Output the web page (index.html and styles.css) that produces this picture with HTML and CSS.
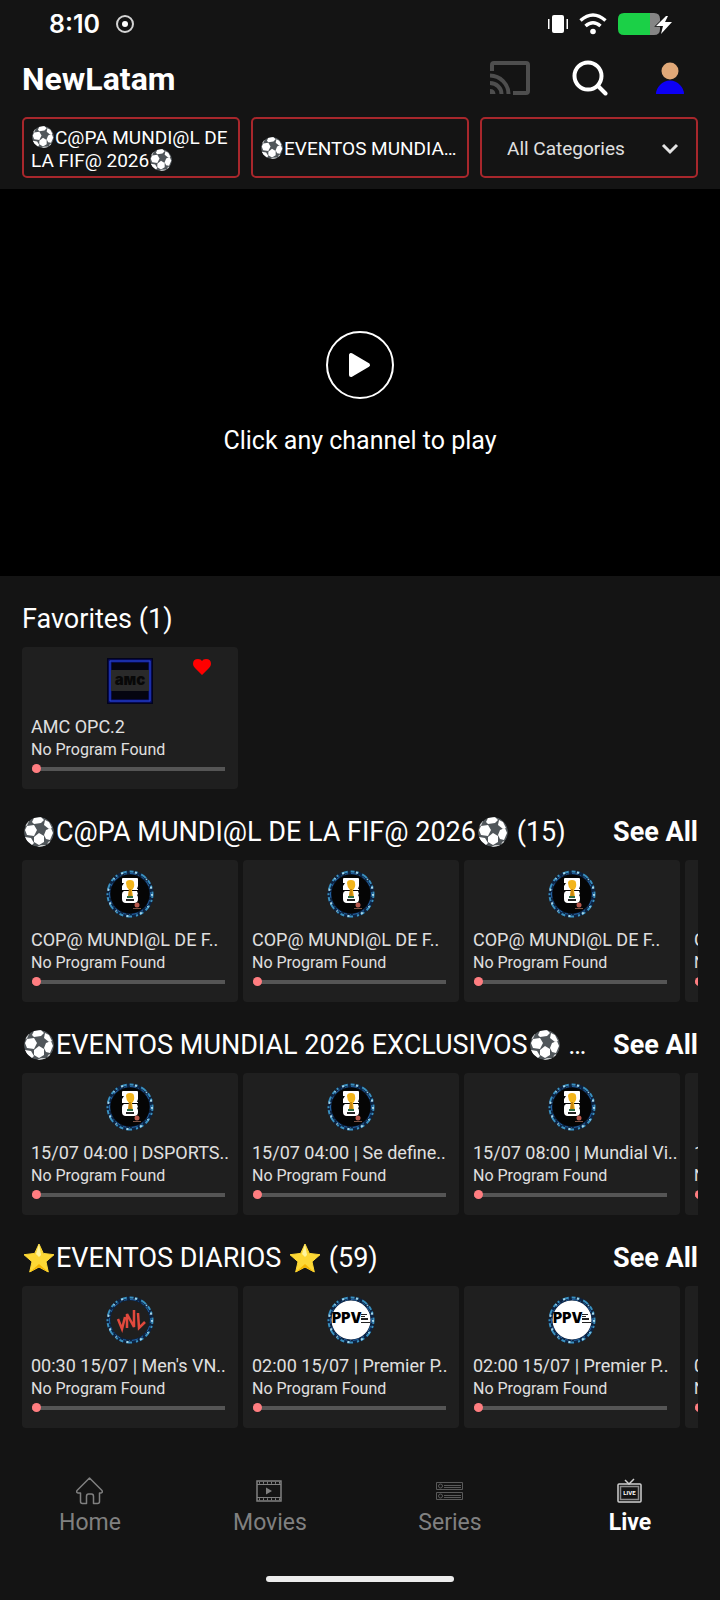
FILE: index.html
```html
<!DOCTYPE html>
<html lang="es">
  <head>
    <meta charset="UTF-8" />
    <meta name="viewport" content="width=device-width, initial-scale=1.0" />
    <title>NewLatam - Live</title>
    <link rel="stylesheet" href="styles.css">
  </head>
  <body>
    <!-- Shared drawings -->
    <svg class="symbols" aria-hidden="true">
      <symbol id="ball" viewBox="0 0 30 30">
        <clipPath id="ball-clip"><circle cx="15" cy="15" r="15" /></clipPath>
        <g clip-path="url(#ball-clip)">
          <circle cx="15" cy="15" r="15" fill="#50565a" />
          <g fill="#fff">
            <path d="M10 1l7-1 3 3-3 3-7 1-2-2z" />
            <path d="M21 3l4 2 3 6-3 1-5-4z" />
            <path d="M3 9l7-1 3 5-3 6-7-1-2-5z" />
            <path d="M10 20l5-4 5 3v6l-5 3-5-3z" />
            <path d="M22 13l5-2 2 5-3 7-4-1-2-4z" />
            <path d="M1 20l6 1 3 5-2 2-5-4z" />
          </g>
          <g fill="#c9cccd">
            <path d="M0 8l3-5 2 1-2 5zM13 30l4-2 6 0-2 3zM24 25l2-1 1 2-4 3z" />
          </g>
        </g>
      </symbol>
      <symbol id="star" viewBox="0 0 30 30">
        <path d="M15 1l4.300 9.400 10.700 1.300-8 7 2.300 10.300-9.300-5-9.300 5L8 18.700 0 11.700l10.700-1.300z" fill="#fdd835" stroke="#fdd835" stroke-linejoin="round" />
        <path d="M15 1l2 11-2 2-3-3z" fill="#fff59d" />
        <path d="M24 29l-9-5-9 5 9-8z" fill="#f4b400" />
      </symbol>
      <symbol id="ring" viewBox="0 0 48 48">
        <g fill="none">
          <circle cx="24" cy="24" r="21.500" stroke="#0c2342" stroke-width="4" />
          <circle cx="24" cy="24" r="22.500" stroke="#3a8fbd" stroke-width="2" stroke-dasharray="4 2 2 4 6 3" />
          <circle cx="24" cy="24" r="20.500" stroke="#2463a4" stroke-width="1" stroke-dasharray="3 3 6 2 1 3" />
          <circle cx="24" cy="24" r="22" stroke="#a5d6ea" stroke-width="2" stroke-dasharray="2 11 1 8 2 12" />
        </g>
      </symbol>
      <symbol id="logo-26" viewBox="0 0 48 48">
        <circle cx="24" cy="24" r="20" fill="#050505" />
        <use href="#ring" />
        <g fill="#fff">
          <path d="M17 8h14q1 0 1 1v7l-1 3h1v1H16v-4l2-3h-2V9q0-1 1-1z" />
          <path d="M18 21h13l1 3-1 1q1 1 1 3v1q0 4-4 4h-8q-4 0-4-4v-5q0-2 2-3z" />
        </g>
        <path d="M20 13q0-3 4-3t4 3q1 4-2 7l1 7h-5l1-7q-3-3-3-7z" fill="#f3b51b" />
        <path d="M23 19h2l1 8h-4z" fill="#c9870f" />
        <path d="M21 26h6v2h-6z" fill="#2c6b45" />
        <path d="M20 29h8v2h-8z" fill="#222" />
        <circle cx="31" cy="35" r="2.500" fill="#b95a4e" />
        <path d="M27 38h8v1h-8z" fill="#7b5346" />
      </symbol>
      <symbol id="logo-vnl" viewBox="0 0 48 48">
        <use href="#ring" />
        <path d="M12 23l4 10 3-12M21 32V18l7 13V14M32 17l1 15 6-6" fill="none" stroke="#e2493d" stroke-width="2.500" />
      </symbol>
      <symbol id="logo-ppv" viewBox="0 0 48 48">
        <circle cx="24" cy="24" r="20" fill="#fff" />
        <use href="#ring" />
        <path d="M34 18h6v1h-6zM34 20h4v1h-4zM34 22h7v2h-7zM34 26h9v1h-9z" fill="#222" />
      </symbol>
      <symbol id="logo-amc" viewBox="0 0 48 48">
        <path d="M1 1h46v46H1z" fill="#02031d" />
        <path d="M4 4h40v40H4z" fill="#050510" stroke="#0a1280" stroke-width="3" />
        <path d="M4 4h40v40H4z" fill="none" stroke="#2a48d0" />
        <path d="M5 13h38v21H5z" fill="#2a2a2a" />
      </symbol>
    </svg>

    <header class="top">
      <div class="status-bar">
        <div class="status-left">
          <span class="clock">8:10</span>
          <svg width="18" height="18" viewBox="0 0 18 18" aria-hidden="true">
            <circle cx="9" cy="9" r="8" fill="none" stroke="#d4d4d4" stroke-width="2" />
            <circle cx="9" cy="9" r="3" fill="#fff" />
          </svg>
        </div>
        <div class="status-right">
          <svg width="20" height="20" viewBox="0 0 20 20" fill="#fff" aria-hidden="true">
            <rect x="4" y="1" width="12" height="18" rx="2" />
            <rect x="0" y="5" width="1.500" height="10" />
            <rect x="18.500" y="5" width="1.500" height="10" />
          </svg>
          <svg width="28" height="22" viewBox="0 0 28 22" aria-hidden="true">
            <path d="M1.500 7.500q12.500-11 25 0M6.500 13q7.500-6.500 15 0" fill="none" stroke="#fff" stroke-width="3.500" />
            <circle cx="14" cy="18.500" r="2.800" fill="#fff" />
          </svg>
          <svg width="54" height="24" viewBox="0 0 54 24" aria-hidden="true">
            <path d="M32 1h4q6 0 6 6v10q0 6-6 6h-4z" fill="#858585" />
            <path d="M32 1v22H6q-6 0-6-6V7q0-6 6-6z" fill="#1bd047" />
            <path d="M48 4L38 14h7l-2 8 11-12h-7l3-6z" fill="#fff" stroke="#141414" stroke-width="1.500" paint-order="stroke" />
          </svg>
        </div>
      </div>

      <div class="title-bar">
        <h1>NewLatam</h1>
        <div class="actions">
          <button class="icon-btn" aria-label="Cast">
            <svg width="40" height="34" viewBox="0 0 40 34" fill="none" stroke="#4e4e4e" stroke-width="4">
              <path d="M2 10V4q0-2 2-2h32q2 0 2 2v26q0 2-2 2H23" />
              <path d="M0 14.500a19 18.500 0 0 1 18.500 18.500M0 22a11.500 11 0 0 1 11.500 11" />
              <path d="M0 28q5 0 5.500 5H0z" fill="#4e4e4e" stroke="none" />
            </svg>
          </button>
          <button class="icon-btn" aria-label="Search">
            <svg width="36" height="36" viewBox="0 0 36 36" fill="none" stroke="#fff" stroke-width="4" stroke-linecap="round">
              <circle cx="16" cy="16" r="13.500" />
              <path d="M26 26l7.500 7.500" />
            </svg>
          </button>
          <button class="icon-btn" aria-label="Profile">
            <svg width="28" height="32" viewBox="0 0 28 32">
              <circle cx="14" cy="9" r="8.500" fill="#e0a878" />
              <path d="M0 32q0-5 4-9 4-4.500 10-4.500t10 4.500q4 4 4 9z" fill="#0d00f5" />
            </svg>
          </button>
        </div>
      </div>

      <div class="filters">
        <button class="filter"><span class="filter-text two-lines"><svg class="emoji"><use href="#ball" /></svg>C@PA MUNDI@L DE LA FIF@ 2026<svg class="emoji"><use href="#ball" /></svg></span></button>
        <button class="filter"><span class="filter-text"><svg class="emoji"><use href="#ball" /></svg>EVENTOS MUNDIAL 2026 EXCLUSIVOS</span></button>
        <div class="select-wrap">
          <select class="filter" aria-label="Categories">
            <option>All Categories</option>
          </select>
          <svg class="chevron" width="18" height="12" viewBox="0 0 18 12" aria-hidden="true">
            <path d="M2 2l7 7 7-7" fill="none" stroke="#e4e4e4" stroke-width="3" />
          </svg>
        </div>
      </div>
    </header>

    <section class="player">
      <button class="play" aria-label="Play">
        <svg width="24" height="26" viewBox="0 0 24 26">
          <path d="M3 3v20l17-10z" fill="#fff" stroke="#fff" stroke-width="4" stroke-linejoin="round" />
        </svg>
      </button>
      <p>Click any channel to play</p>
    </section>

    <main>
      <section>
        <div class="row-head">
          <h2>Favorites (1)</h2>
        </div>
        <div class="row">
          <article class="card">
            <svg class="logo" viewBox="0 0 48 48"><use href="#logo-amc" /><text x="24" y="28" class="amc-text">aмc</text></svg>
            <svg class="heart" viewBox="0 0 18 16" aria-label="Favorite"><path d="M9 16L2 9Q0 7 0 5 0 0 5 0q3 0 4 2 1-2 4-2 5 0 5 5 0 2-2 4z" fill="#f00" /></svg>
            <h3>AMC OPC.2</h3>
            <p>No Program Found</p>
            <input type="range" class="progress" value="0" aria-label="Program progress">
          </article>
        </div>
      </section>

      <section>
        <div class="row-head">
          <h2><svg class="emoji"><use href="#ball" /></svg>C@PA MUNDI@L DE LA FIF@ 2026<svg class="emoji"><use href="#ball" /></svg> (15)</h2>
          <a href="#">See All</a>
        </div>
        <div class="row">
          <article class="card">
            <svg class="logo"><use href="#logo-26" /></svg>
            <h3>COP@ MUNDI@L DE F..</h3>
            <p>No Program Found</p>
            <input type="range" class="progress" value="0" aria-label="Program progress">
          </article>
          <article class="card">
            <svg class="logo"><use href="#logo-26" /></svg>
            <h3>COP@ MUNDI@L DE F..</h3>
            <p>No Program Found</p>
            <input type="range" class="progress" value="0" aria-label="Program progress">
          </article>
          <article class="card">
            <svg class="logo"><use href="#logo-26" /></svg>
            <h3>COP@ MUNDI@L DE F..</h3>
            <p>No Program Found</p>
            <input type="range" class="progress" value="0" aria-label="Program progress">
          </article>
          <article class="card">
            <svg class="logo"><use href="#logo-26" /></svg>
            <h3>COP@ MUNDI@L DE F..</h3>
            <p>No Program Found</p>
            <input type="range" class="progress" value="0" aria-label="Program progress">
          </article>
        </div>
      </section>

      <section>
        <div class="row-head">
          <h2><svg class="emoji"><use href="#ball" /></svg>EVENTOS MUNDIAL 2026 EXCLUSIVOS<svg class="emoji"><use href="#ball" /></svg> (15)</h2>
          <a href="#">See All</a>
        </div>
        <div class="row">
          <article class="card">
            <svg class="logo"><use href="#logo-26" /></svg>
            <h3>15/07 04:00 | DSPORTS..</h3>
            <p>No Program Found</p>
            <input type="range" class="progress" value="0" aria-label="Program progress">
          </article>
          <article class="card">
            <svg class="logo"><use href="#logo-26" /></svg>
            <h3>15/07 04:00 | Se define..</h3>
            <p>No Program Found</p>
            <input type="range" class="progress" value="0" aria-label="Program progress">
          </article>
          <article class="card">
            <svg class="logo"><use href="#logo-26" /></svg>
            <h3>15/07 08:00 | Mundial Vi..</h3>
            <p>No Program Found</p>
            <input type="range" class="progress" value="0" aria-label="Program progress">
          </article>
          <article class="card">
            <svg class="logo"><use href="#logo-26" /></svg>
            <h3>15/07 08:00 | Mundial Vi..</h3>
            <p>No Program Found</p>
            <input type="range" class="progress" value="0" aria-label="Program progress">
          </article>
        </div>
      </section>

      <section>
        <div class="row-head">
          <h2><svg class="emoji"><use href="#star" /></svg>EVENTOS DIARIOS <svg class="emoji"><use href="#star" /></svg> (59)</h2>
          <a href="#">See All</a>
        </div>
        <div class="row">
          <article class="card">
            <svg class="logo"><use href="#logo-vnl" /></svg>
            <h3>00:30 15/07 | Men's VN..</h3>
            <p>No Program Found</p>
            <input type="range" class="progress" value="0" aria-label="Program progress">
          </article>
          <article class="card">
            <svg class="logo" viewBox="0 0 48 48"><use href="#logo-ppv" /><text x="5" y="27" class="ppv-text">PPV</text></svg>
            <h3>02:00 15/07 | Premier P..</h3>
            <p>No Program Found</p>
            <input type="range" class="progress" value="0" aria-label="Program progress">
          </article>
          <article class="card">
            <svg class="logo" viewBox="0 0 48 48"><use href="#logo-ppv" /><text x="5" y="27" class="ppv-text">PPV</text></svg>
            <h3>02:00 15/07 | Premier P..</h3>
            <p>No Program Found</p>
            <input type="range" class="progress" value="0" aria-label="Program progress">
          </article>
          <article class="card">
            <svg class="logo"><use href="#logo-ppv" /></svg>
            <h3>02:00 15/07 | Premier P..</h3>
            <p>No Program Found</p>
            <input type="range" class="progress" value="0" aria-label="Program progress">
          </article>
        </div>
      </section>
    </main>

    <footer class="bottom">
      <nav class="tabs">
        <a href="#" class="tab">
          <svg width="28" height="28" viewBox="0 0 28 28" fill="none" stroke="#808080" stroke-width="1.500" stroke-linejoin="round">
            <path d="M13.500 1L26 13.500q1 2.500-1.500 2.500h-1v8.500q0 2-2 2h-4v-7q0-2.500-2-2.500h-3q-2 0-2 2.500v7h-4q-2 0-2-2V16h-2Q0 16 1 13.500z" />
          </svg>
          Home
        </a>
        <a href="#" class="tab">
          <svg width="28" height="28" viewBox="0 0 28 28" fill="none" stroke="#808080">
            <rect x="1" y="4" width="24" height="20" stroke-width="1.500" />
            <path d="M1 7.500h24M1 20.500h24" />
            <path d="M3 5.700h21M3 22.300h21" stroke-width="2" stroke-dasharray="1 3" />
            <path d="M10 10.500v7l6-3.500z" fill="#808080" stroke="none" />
          </svg>
          Movies
        </a>
        <a href="#" class="tab">
          <svg width="28" height="28" viewBox="0 0 28 28" fill="none" stroke="#5a5a5a">
            <path d="M.500 5.500h26v7H.500zM.500 15.500h26v7H.500z" />
            <circle cx="4.500" cy="9" r="2" />
            <circle cx="4.500" cy="19" r="2" />
            <path d="M8 8.500h17M8 10.500h17M8 18.500h17M8 20.500h17" />
          </svg>
          Series
        </a>
        <a href="#" class="tab active">
          <svg width="28" height="28" viewBox="0 0 28 28" fill="none" stroke="#d0d0d0">
            <path d="M9 3l4 4 5-5" stroke-width="1.500" />
            <rect x="2" y="7" width="23" height="18" rx="1" stroke-width="1.500" />
            <rect x="4.500" y="9.500" width="18" height="13" stroke="#8a8a8a" stroke-width="1.500" />
            <text x="13.500" y="18" class="live-text">LIVE</text>
          </svg>
          Live
        </a>
      </nav>
      <div class="home-bar"></div>
    </footer>
  </body>
</html>
```

FILE: styles.css
```css
* {
    box-sizing: border-box;
}

body {
    margin: 0;
    min-height: 100vh;
    display: flex;
    flex-direction: column;
    background: #141414;
    color: #fff;
    font-family: Roboto, "Liberation Sans", sans-serif;
}

h1, h2, h3, p {
    margin: 0;
}

button {
    background: none;
    border: none;
    padding: 0;
    color: inherit;
    font: inherit;
    cursor: pointer;
}

a {
    color: inherit;
    text-decoration: none;
}

.symbols {
    position: absolute;
    width: 0;
    height: 0;
}

.top {
    padding: 0 22px 11px;
}

.status-bar {
    display: flex;
    justify-content: space-between;
    align-items: center;
    height: 48px;
    padding: 0 26px 0 27px;
}

.status-left {
    display: flex;
    align-items: center;
    gap: 16px;
}

.status-right {
    display: flex;
    align-items: center;
    gap: 11px;
}

.clock {
    font-family: Inter, Roboto, sans-serif;
    font-size: 25px;
    font-weight: 600;
    line-height: 30px;
}

.title-bar {
    display: flex;
    justify-content: space-between;
    align-items: center;
    height: 60px;
}

.title-bar h1 {
    padding-top: 2px;
    font-size: 32px;
    line-height: 38px;
}

.actions {
    display: flex;
    gap: 24px;
}

.icon-btn {
    display: flex;
    align-items: center;
    justify-content: center;
    width: 56px;
    height: 48px;
}

.filters {
    display: grid;
    grid-template-columns: repeat(3, minmax(0, 1fr));
    gap: 11px;
    margin-top: 9px;
}

.filter {
    display: flex;
    align-items: center;
    width: 100%;
    height: 61px;
    padding: 2px 7px 0;
    border: 2px solid #a8272c;
    border-radius: 5px;
    font-size: 19px;
    line-height: 23px;
    text-align: left;
}

.filter-text {
    width: 100%;
    overflow: hidden;
    white-space: nowrap;
    text-overflow: ellipsis;
}

.filter-text.two-lines {
    white-space: normal;
}

.filter .emoji {
    width: 22px;
    height: 22px;
    margin: 0 1px;
    vertical-align: -4px;
}

.select-wrap {
    position: relative;
}

select.filter {
    appearance: none;
    padding: 2px 50px 0 25px;
    background: transparent;
    color: #e0e0e0;
    font-family: inherit;
}

.chevron {
    position: absolute;
    right: 19px;
    top: 26px;
    pointer-events: none;
}

.player {
    display: flex;
    flex-direction: column;
    align-items: center;
    justify-content: center;
    gap: 27px;
    aspect-ratio: 720 / 387;
    padding-top: 22px;
    background: #000;
    font-size: 25px;
    line-height: 30px;
}

.play {
    display: flex;
    align-items: center;
    justify-content: center;
    width: 68px;
    height: 68px;
    border: 2px solid #fff;
    border-radius: 50%;
}

main {
    padding: 0 22px;
}

.row-head {
    display: flex;
    align-items: center;
    justify-content: space-between;
    gap: 22px;
    height: 71px;
    padding-top: 14px;
    font-size: 27px;
    line-height: 34px;
}

.row-head h2 {
    min-width: 0;
    overflow: hidden;
    white-space: nowrap;
    text-overflow: ellipsis;
    font-size: 27px;
    font-weight: 400;
}

.row-head a {
    flex: none;
    font-weight: 700;
}

.row-head .emoji {
    width: 30px;
    height: 30px;
    margin: 0 2px;
    vertical-align: -6px;
}

.row {
    display: flex;
    gap: 5px;
    overflow: hidden;
}

.card {
    position: relative;
    display: flex;
    flex-direction: column;
    flex: none;
    width: 216px;
    height: 142px;
    padding: 10px 9px;
    border-radius: 4px;
    background: #1f1f1f;
    color: #e0e0e0;
}

.logo {
    align-self: center;
    width: 48px;
    height: 48px;
    margin-bottom: 11px;
}

.heart {
    position: absolute;
    top: 12px;
    right: 27px;
    width: 18px;
    height: 16px;
}

.card h3 {
    font-size: 18px;
    font-weight: 400;
    line-height: 22px;
    white-space: nowrap;
}

.card p {
    font-size: 16px;
    line-height: 24px;
}

.progress {
    appearance: none;
    height: 9px;
    margin: 2px 4px 0 1px;
    background: linear-gradient(#555, #555) center / 100% 4px no-repeat;
}

.progress::-webkit-slider-thumb {
    appearance: none;
    width: 9px;
    height: 9px;
    border-radius: 50%;
    background: #ff7d80;
}

.bottom {
    margin-top: auto;
    padding-bottom: 18px;
}

.tabs {
    display: grid;
    grid-template-columns: repeat(4, 1fr);
    margin-bottom: 39px;
}

.tab {
    display: flex;
    flex-direction: column;
    align-items: center;
    gap: 4px;
    color: #808080;
    font-size: 23px;
    line-height: 28px;
}

.tab.active {
    color: #fff;
    font-weight: 700;
}

.home-bar {
    width: 188px;
    height: 6px;
    margin: 0 auto;
    border-radius: 3px;
    background: #ececec;
}

/* lettering inside the logos */
.ppv-text {
    fill: #000;
    font-family: Inter, Roboto, sans-serif;
    font-size: 14px;
    font-weight: 900;
}

.amc-text {
    fill: #080808;
    font-family: Inter, Roboto, sans-serif;
    font-size: 15px;
    font-weight: 900;
    text-anchor: middle;
}

.live-text {
    fill: #fff;
    stroke: none;
    font-size: 6px;
    font-weight: 700;
    text-anchor: middle;
}
```
